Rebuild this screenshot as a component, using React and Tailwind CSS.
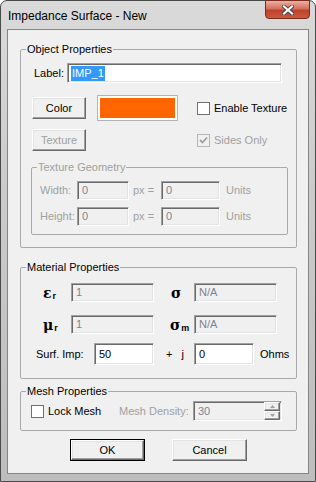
import React from "react";

const sunken =
  "border border-t-[#a0a0a0] border-l-[#a0a0a0] border-r-white border-b-white shadow-[inset_1px_1px_0_#696969,inset_-1px_-1px_0_#e3e3e3]";
const raised =
  "border border-t-white border-l-white border-r-[#696969] border-b-[#696969] shadow-[inset_-1px_-1px_0_#a0a0a0,inset_1px_1px_0_#e3e3e3] bg-[#f0f0f0]";

function Group({ title, disabled, className = "", children }) {
  return (
    <fieldset className={`border border-[#a9a9a9] rounded-[2px] p-0 ${className}`}>
      <legend
        className={`ml-[5px] px-[1px] text-[11px] leading-[14px] ${
          disabled ? "text-[#a0a0a0]" : "text-black"
        }`}
      >
        {title}
      </legend>
      {children}
    </fieldset>
  );
}

function Field({ value, width, height = "h-[19px]", enabled, selected }) {
  return (
    <div
      className={`${sunken} ${width} ${height} flex items-center pl-[3px] text-[11px] ${
        enabled ? "bg-white text-black" : "bg-[#f0f0f0] text-[#7d8296]"
      }`}
    >
      {selected ? (
        <span className="bg-[#3399ff] text-white px-[1px] leading-[15px]">{value}</span>
      ) : (
        <span className="pl-[1px]">{value}</span>
      )}
    </div>
  );
}

function Checkbox({ checked, disabled, label }) {
  return (
    <div className="flex items-center">
      <div
        className={`w-[13px] h-[13px] border flex items-center justify-center ${
          disabled ? "border-[#b5b5b5] bg-[#f0f0f0]" : "border-[#707070] bg-white"
        }`}
      >
        {checked && (
          <svg width="9" height="9" viewBox="0 0 9 9">
            <path d="M1 4 L3.5 6.5 L8 1.5" fill="none" stroke="#a0a0a0" strokeWidth="1.8" />
          </svg>
        )}
      </div>
      <span className={`ml-[4px] text-[11px] ${disabled ? "text-[#a0a0a0]" : "text-black"}`}>
        {label}
      </span>
    </div>
  );
}

function Button({ children, disabled, width = "w-[54px]" }) {
  return (
    <div
      className={`${raised} ${width} h-[22px] flex items-center justify-center text-[11px] ${
        disabled ? "text-[#a0a0a0]" : "text-black"
      }`}
    >
      {children}
    </div>
  );
}

function Symbol({ base, sub }) {
  return (
    <span className="flex items-end font-bold text-black">
      <span className="text-[14px] leading-[14px]" style={{ fontFamily: "'DejaVu Serif', serif" }}>
        {base}
      </span>
      {sub && <span className="text-[9px] leading-[9px] ml-[1px] mb-[-1px]">{sub}</span>}
    </span>
  );
}

export default function App() {
  return (
    <div
      className="w-[316px] h-[482px] flex flex-col border border-[#4a4a4a] rounded-t-[7px] bg-[linear-gradient(180deg,#dadada_0%,#cbcbcb_40%,#bdbdbd_100%)]"
      style={{ fontFamily: "'Liberation Sans', Arial, sans-serif" }}
    >
      <div className="h-[28px] flex items-start justify-between pl-[7px] pr-[5px]">
        <span className="mt-[6px] text-[12px] text-black">Impedance Surface - New</span>
        <div className="w-[45px] h-[19px] -mt-[1px] rounded-b-[4px] border border-[#7a2b1f] bg-[linear-gradient(180deg,#eab0a2_0%,#d4705c_45%,#c0402a_55%,#c85a40_100%)] flex items-center justify-center">
          <svg width="12" height="10" viewBox="0 0 12 10">
            <path d="M2 1.5 L10 8.5 M10 1.5 L2 8.5" stroke="#3b3b4a" strokeWidth="3.8" strokeLinecap="square" />
            <path d="M2 1.5 L10 8.5 M10 1.5 L2 8.5" stroke="#ffffff" strokeWidth="2.2" strokeLinecap="square" />
          </svg>
        </div>
      </div>

      <div className="flex-1 mx-[6px] mb-[7px] border border-[#858585] bg-[#f0f0f0] flex flex-col pl-[12px] pr-[11px]">
        <Group title="Object Properties" className="mt-[12px]">
          <div className="pt-[7px] pl-[11px] pb-[12px]">
            <div className="flex items-center h-[20px]">
              <span className="ml-[2px] w-[33px] text-[11px]">Label:</span>
              <Field value="IMP_1" width="w-[215px]" height="h-[20px]" enabled selected />
            </div>

            <div className="flex items-center h-[26px] mt-[12px]">
              <div className="w-[165px] flex items-center">
                <Button>Color</Button>
                <div className="ml-[11px] w-[81px] h-[26px] border border-[#b4b4b4] bg-white p-[2px]">
                  <div className="w-full h-full bg-[#ff6600]" />
                </div>
              </div>
              <Checkbox label="Enable Texture" />
            </div>

            <div className="flex items-center h-[22px] mt-[8px]">
              <div className="w-[165px]">
                <Button disabled>Texture</Button>
              </div>
              <Checkbox label="Sides Only" checked disabled />
            </div>

            <Group title="Texture Geometry" disabled className="mt-[9px] -ml-[1px] w-[257px]">
              <div className="pt-[7px] pl-[8px] pb-[8px] text-[11px] text-[#a0a0a0]">
                <div className="flex items-center h-[19px]">
                  <span className="w-[37px]">Width:</span>
                  <Field value="0" width="w-[52px]" />
                  <span className="ml-[4px] w-[28px]">px =</span>
                  <Field value="0" width="w-[59px]" />
                  <span className="ml-[6px]">Units</span>
                </div>
                <div className="flex items-center h-[19px] mt-[7px]">
                  <span className="w-[37px]">Height:</span>
                  <Field value="0" width="w-[52px]" />
                  <span className="ml-[4px] w-[28px]">px =</span>
                  <Field value="0" width="w-[59px]" />
                  <span className="ml-[6px]">Units</span>
                </div>
              </div>
            </Group>
          </div>
        </Group>

        <Group title="Material Properties" className="mt-[12px]">
          <div className="pt-[9px] pl-[11px] pb-[13px] text-[11px]">
            <div className="flex items-center h-[19px]">
              <div className="w-[39px] pl-[11px]">
                <Symbol base="ε" sub="r" />
              </div>
              <Field value="1" width="w-[83px]" />
              <div className="w-[40px] pl-[17px]">
                <Symbol base="σ" />
              </div>
              <Field value="N/A" width="w-[83px]" />
            </div>
            <div className="flex items-center h-[19px] mt-[13px]">
              <div className="w-[39px] pl-[11px]">
                <Symbol base="μ" sub="r" />
              </div>
              <Field value="1" width="w-[83px]" />
              <div className="w-[40px] pl-[16px]">
                <Symbol base="σ" sub="m" />
              </div>
              <Field value="N/A" width="w-[83px]" />
            </div>
            <div className="flex items-center h-[22px] mt-[9px]">
              <span className="w-[62px] pl-[4px]">Surf. Imp:</span>
              <Field value="50" width="w-[60px]" height="h-[22px]" enabled />
              <span className="w-[40px] pl-[12px] whitespace-pre">+   j</span>
              <Field value="0" width="w-[60px]" height="h-[22px]" enabled />
              <span className="ml-[6px]">Ohms</span>
            </div>
          </div>
        </Group>

        <Group title="Mesh Properties" className="mt-[5px]">
          <div className="pt-[3px] pl-[10px] pb-[9px] text-[11px]">
            <div className="flex items-center h-[20px]">
              <div className="w-[88px]">
                <Checkbox label="Lock Mesh" />
              </div>
              <span className="w-[74px] text-[#a0a0a0]">Mesh Density:</span>
              <div className={`${sunken} w-[89px] h-[20px] bg-[#f0f0f0] flex items-center`}>
                <span className="flex-1 pl-[4px] text-[#7d8296]">30</span>
                <div className="flex flex-col mr-[1px]">
                  <div className={`${raised} w-[16px] h-[9px] flex items-center justify-center`}>
                    <svg width="5" height="3" viewBox="0 0 5 3">
                      <path d="M0 3 L2.5 0 L5 3 Z" fill="#a0a0a0" />
                    </svg>
                  </div>
                  <div className={`${raised} w-[16px] h-[9px] flex items-center justify-center`}>
                    <svg width="5" height="3" viewBox="0 0 5 3">
                      <path d="M0 0 L2.5 3 L5 0 Z" fill="#a0a0a0" />
                    </svg>
                  </div>
                </div>
              </div>
            </div>
          </div>
        </Group>

        <div className="flex mt-[8px] ml-[50px] gap-[27px]">
          <div className="border border-black">
            <div className={`${raised} w-[73px] h-[20px] flex items-center justify-center text-[11px]`}>
              OK
            </div>
          </div>
          <Button width="w-[75px]">Cancel</Button>
        </div>
      </div>
    </div>
  );
}
